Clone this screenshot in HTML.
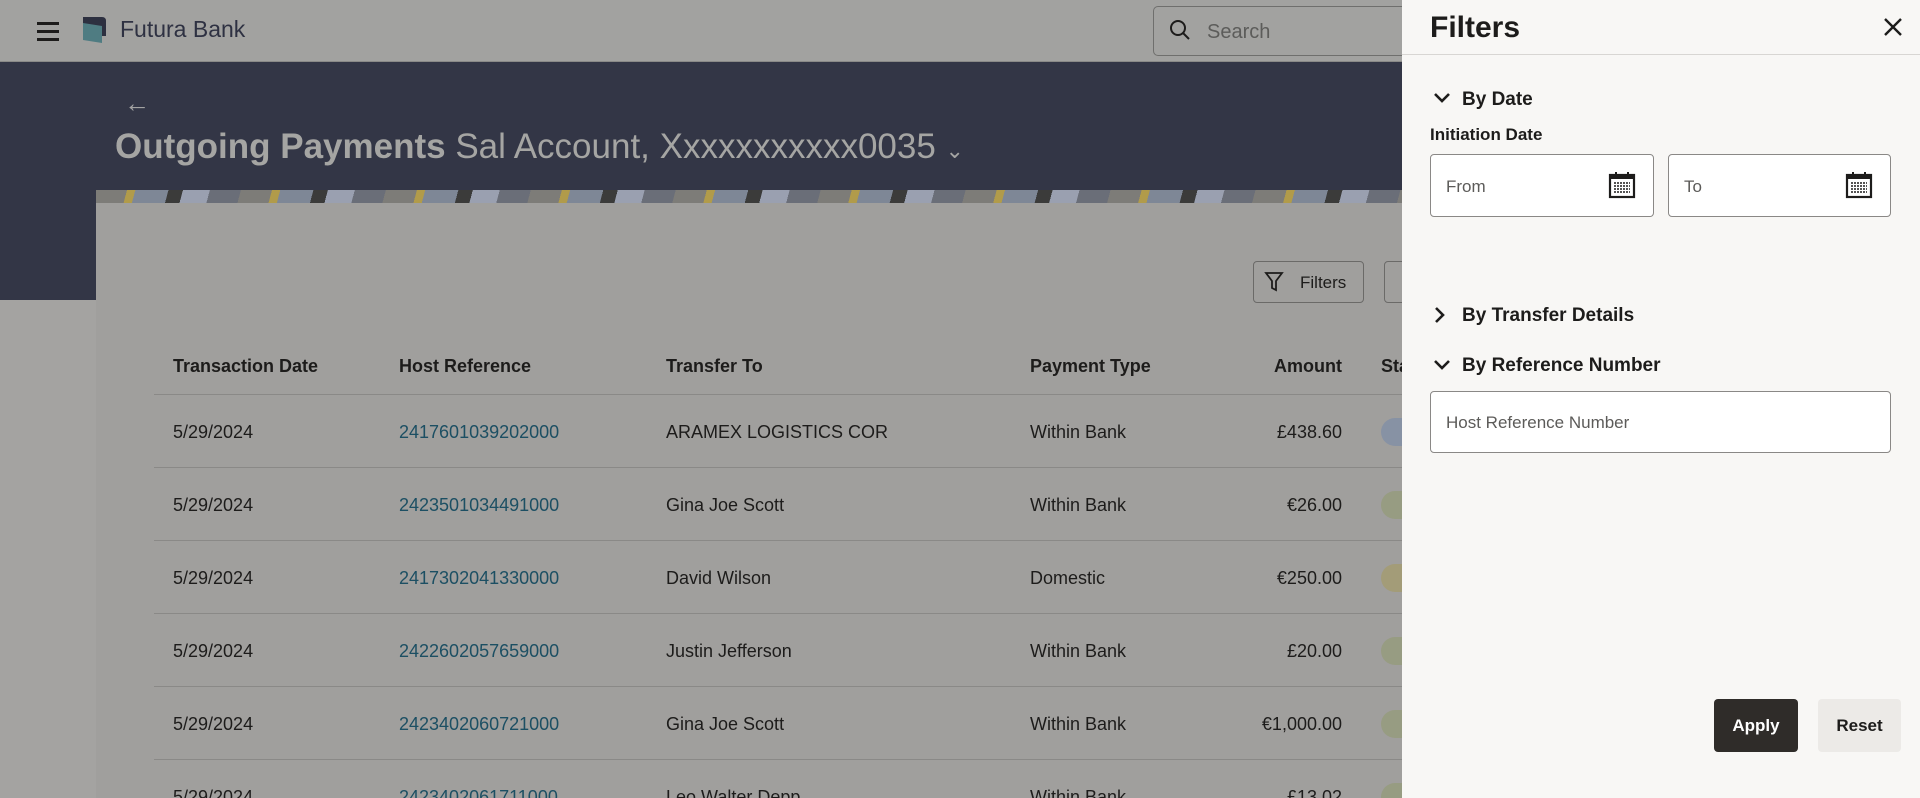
<!DOCTYPE html>
<html style="overflow:hidden;width:1920px;height:798px"><head><meta charset="utf-8"><style>
*{box-sizing:border-box;margin:0;padding:0}
body{width:1920px;height:798px;overflow:hidden;background:#a4a3a1;font-family:"Liberation Sans",sans-serif;position:relative;color:#1d1c1b}
.abs{position:absolute}
.hdr{left:0;top:0;width:1920px;height:62px;background:#a2a2a0;border-bottom:1px solid #8a8a88}
.band{left:0;top:62px;width:1920px;height:238px;background:#333646}
.card{left:96px;top:190px;width:1400px;height:608px;background:#a09f9d}
.strip{left:96px;top:190px;width:1400px;height:13px;background:repeating-linear-gradient(105deg,#7d7c78 0 30px,#b19b4a 30px 38px,#7e8796 38px 70px,#3b3b3a 70px 84px,#9aa0b0 84px 110px,#6a6e78 110px 140px)}
.tbl{font-size:18px;color:#1d1c1b}
.th{font-weight:bold;top:356px}
.line{left:154px;width:1250px;height:1px;background:#8a8987}
.link{color:#1c4f63}
.pill{width:40px;height:28px;border-radius:14px}
.panel{left:1402px;top:0;width:518px;height:798px;background:#f8f7f5}
.inp{background:#fff;border:1px solid #8a8886;border-radius:4px}
.sec{font-weight:bold;font-size:19px;color:#1d1c1b}
</style></head><body>
<div class="abs hdr"></div>
<div class="abs" style="left:37px;top:22px;width:22px;height:3px;background:#1d1c1b;box-shadow:0 8px 0 #1d1c1b,0 16px 0 #1d1c1b"></div>
<svg class="abs" style="left:80px;top:14px" width="30" height="30" viewBox="0 0 30 30"><path d="M3 3 L22 3 Q26 3 26 7 L26 22 L8 22 L3 19 Z" fill="#2d3040"/><path d="M3 9 L22 12 L22 29 L3 26 Z" fill="#4f7c82"/></svg>
<div class="abs" style="left:120px;top:16px;font-size:23px;color:#2e3142">Futura Bank</div>
<div class="abs" style="left:1153px;top:6px;width:300px;height:50px;border:1px solid #6f6f6d;border-radius:5px"></div>
<svg class="abs" style="left:1168px;top:18px" width="24" height="24" viewBox="0 0 24 24"><circle cx="10" cy="10" r="7" fill="none" stroke="#1d1c1b" stroke-width="2"/><path d="M15 15 L21 21" stroke="#1d1c1b" stroke-width="2"/></svg>
<div class="abs" style="left:1207px;top:21px;font-size:20px;color:#5c5c5a">Search</div>
<div class="abs band"></div>
<div class="abs" style="left:124px;top:88px;font-size:26px;color:#a3a3a3">←</div>
<div class="abs" style="left:115px;top:127px;font-size:35px;color:#a5a5a3"><b>Outgoing Payments</b> Sal Account, Xxxxxxxxxxx0035 <span style="font-size:22px">⌄</span></div>
<div class="abs card"></div>
<div class="abs strip"></div>
<div class="abs" style="left:1253px;top:261px;width:111px;height:42px;border:1px solid #6b6a68;border-radius:4px;font-size:17px;padding:11px 0 0 46px">Filters</div>
<svg class="abs" style="left:1264px;top:271px" width="20" height="22" viewBox="0 0 20 22"><path d="M2 2 H18 L12 10 V19 L8 17 V10 Z" fill="none" stroke="#1d1c1b" stroke-width="1.8"/></svg>
<div class="abs" style="left:1384px;top:261px;width:40px;height:42px;border:1px solid #6b6a68;border-radius:4px"></div>
<div class="tbl">
<div class="abs th" style="left:173px">Transaction Date</div>
<div class="abs th" style="left:399px">Host Reference</div>
<div class="abs th" style="left:666px">Transfer To</div>
<div class="abs th" style="left:1030px">Payment Type</div>
<div class="abs th" style="left:1262px;width:80px;text-align:right">Amount</div>
<div class="abs th" style="left:1381px">Status</div>
<div class="abs line" style="top:394px"></div>
<div class="abs line" style="top:467px"></div>
<div class="abs line" style="top:540px"></div>
<div class="abs line" style="top:613px"></div>
<div class="abs line" style="top:686px"></div>
<div class="abs line" style="top:759px"></div>

<div class="abs" style="left:173px;top:422px">5/29/2024</div><div class="abs link" style="left:399px;top:422px">2417601039202000</div><div class="abs" style="left:666px;top:422px">ARAMEX LOGISTICS COR</div><div class="abs" style="left:1030px;top:422px">Within Bank</div><div class="abs" style="left:1200px;width:142px;text-align:right;top:422px">£438.60</div><div class="abs pill" style="left:1381px;top:418px;background:#8792a4"></div>
<div class="abs" style="left:173px;top:495px">5/29/2024</div><div class="abs link" style="left:399px;top:495px">2423501034491000</div><div class="abs" style="left:666px;top:495px">Gina Joe Scott</div><div class="abs" style="left:1030px;top:495px">Within Bank</div><div class="abs" style="left:1200px;width:142px;text-align:right;top:495px">€26.00</div><div class="abs pill" style="left:1381px;top:491px;background:#979c82"></div>
<div class="abs" style="left:173px;top:568px">5/29/2024</div><div class="abs link" style="left:399px;top:568px">2417302041330000</div><div class="abs" style="left:666px;top:568px">David Wilson</div><div class="abs" style="left:1030px;top:568px">Domestic</div><div class="abs" style="left:1200px;width:142px;text-align:right;top:568px">€250.00</div><div class="abs pill" style="left:1381px;top:564px;background:#a39c78"></div>
<div class="abs" style="left:173px;top:641px">5/29/2024</div><div class="abs link" style="left:399px;top:641px">2422602057659000</div><div class="abs" style="left:666px;top:641px">Justin Jefferson</div><div class="abs" style="left:1030px;top:641px">Within Bank</div><div class="abs" style="left:1200px;width:142px;text-align:right;top:641px">£20.00</div><div class="abs pill" style="left:1381px;top:637px;background:#979c82"></div>
<div class="abs" style="left:173px;top:714px">5/29/2024</div><div class="abs link" style="left:399px;top:714px">2423402060721000</div><div class="abs" style="left:666px;top:714px">Gina Joe Scott</div><div class="abs" style="left:1030px;top:714px">Within Bank</div><div class="abs" style="left:1200px;width:142px;text-align:right;top:714px">€1,000.00</div><div class="abs pill" style="left:1381px;top:710px;background:#979c82"></div>
<div class="abs" style="left:0;top:780px;width:1402px;height:18px;overflow:hidden">
<div class="abs" style="left:173px;top:7px">5/29/2024</div><div class="abs link" style="left:399px;top:7px">2423402061711000</div><div class="abs" style="left:666px;top:7px">Leo Walter Depp</div><div class="abs" style="left:1030px;top:7px">Within Bank</div><div class="abs" style="left:1200px;width:142px;text-align:right;top:7px">£13.02</div><div class="abs pill" style="left:1381px;top:3px;background:#979c82"></div>
</div>
</div>

<div class="abs panel"></div>
<div class="abs" style="left:1430px;top:11px;font-size:30px;font-weight:bold">Filters</div>
<svg class="abs" style="left:1882px;top:16px" width="22" height="22" viewBox="0 0 22 22"><path d="M3 3 L19 19 M19 3 L3 19" stroke="#1d1c1b" stroke-width="2.4"/></svg>
<div class="abs" style="left:1402px;top:54px;width:518px;height:1px;background:#d8d6d3"></div>
<svg class="abs" style="left:1432px;top:91px" width="20" height="14" viewBox="0 0 20 14"><path d="M3 3 L10 10 L17 3" fill="none" stroke="#1d1c1b" stroke-width="2.6"/></svg>
<div class="abs sec" style="left:1462px;top:89px">By Date</div>
<div class="abs" style="left:1430px;top:125px;font-size:17px;font-weight:bold">Initiation Date</div>
<div class="abs inp" style="left:1430px;top:154px;width:224px;height:63px"></div>
<div class="abs" style="left:1446px;top:177px;font-size:17px;color:#5c5b59">From</div>
<svg class="abs" style="left:1608px;top:171px" width="28" height="28" viewBox="0 0 28 28"><rect x="2" y="4" width="24" height="22" fill="none" stroke="#1d1c1b" stroke-width="2.2"/><rect x="2" y="4" width="24" height="4" fill="#1d1c1b"/><path d="M8 1v5M20 1v5" stroke="#1d1c1b" stroke-width="2"/><path d="M6 12h16M6 15h16M6 18h16M6 21h16" stroke="#1d1c1b" stroke-width="1.6" stroke-dasharray="2 1"/></svg>
<div class="abs inp" style="left:1668px;top:154px;width:223px;height:63px"></div>
<div class="abs" style="left:1684px;top:177px;font-size:17px;color:#5c5b59">To</div>
<svg class="abs" style="left:1845px;top:171px" width="28" height="28" viewBox="0 0 28 28"><rect x="2" y="4" width="24" height="22" fill="none" stroke="#1d1c1b" stroke-width="2.2"/><rect x="2" y="4" width="24" height="4" fill="#1d1c1b"/><path d="M8 1v5M20 1v5" stroke="#1d1c1b" stroke-width="2"/><path d="M6 12h16M6 15h16M6 18h16M6 21h16" stroke="#1d1c1b" stroke-width="1.6" stroke-dasharray="2 1"/></svg>
<svg class="abs" style="left:1432px;top:305px" width="14" height="20" viewBox="0 0 14 20"><path d="M4 3 L11 10 L4 17" fill="none" stroke="#1d1c1b" stroke-width="2.6"/></svg>
<div class="abs sec" style="left:1462px;top:305px">By Transfer Details</div>
<svg class="abs" style="left:1432px;top:358px" width="20" height="14" viewBox="0 0 20 14"><path d="M3 3 L10 10 L17 3" fill="none" stroke="#1d1c1b" stroke-width="2.6"/></svg>
<div class="abs sec" style="left:1462px;top:355px">By Reference Number</div>
<div class="abs inp" style="left:1430px;top:391px;width:461px;height:62px"></div>
<div class="abs" style="left:1446px;top:413px;font-size:17px;color:#5c5b59">Host Reference Number</div>
<div class="abs" style="left:1714px;top:699px;width:84px;height:53px;background:#2f2c29;border-radius:4px;color:#fff;font-weight:bold;font-size:17px;text-align:center;line-height:53px">Apply</div>
<div class="abs" style="left:1818px;top:699px;width:83px;height:53px;background:#eceae7;border-radius:4px;color:#1d1c1b;font-weight:bold;font-size:17px;text-align:center;line-height:53px">Reset</div>
</body></html>
